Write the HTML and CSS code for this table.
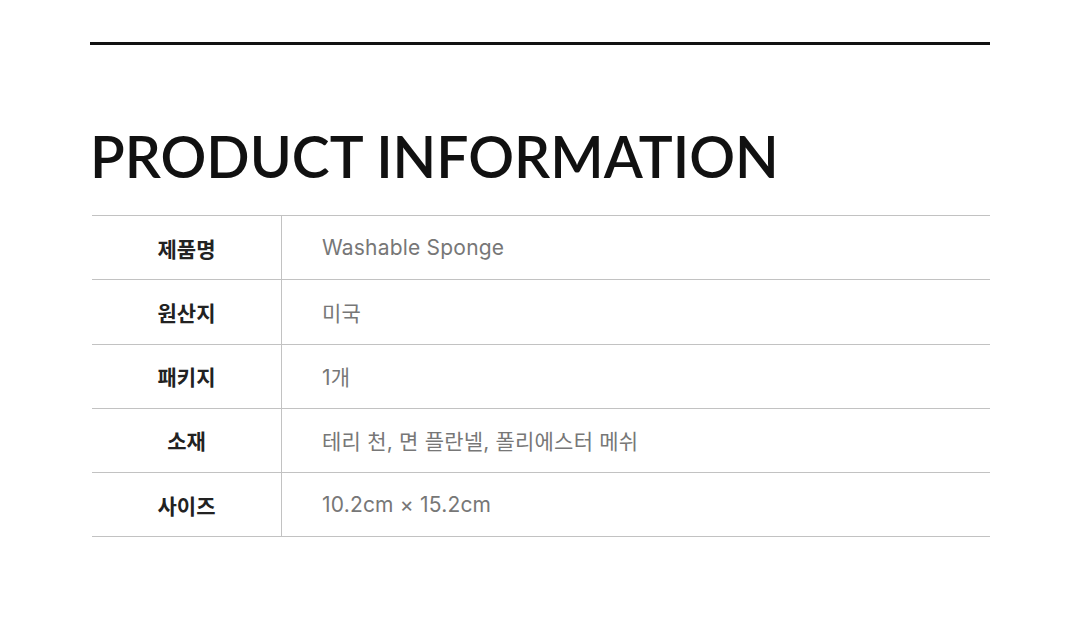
FILE: index.html
```html
<!DOCTYPE html>
<html lang="ko">
<head>
<meta charset="utf-8">
<link rel="stylesheet" href="styles.css">
</head>
<body>
<div class="page">
  <div class="topline"></div>
  <h1 class="title">PRODUCT INFORMATION</h1>
  <div class="table">
    <div class="row"><div class="label">제품명</div><div class="value">Washable Sponge</div></div>
    <div class="row"><div class="label">원산지</div><div class="value">미국</div></div>
    <div class="row"><div class="label">패키지</div><div class="value">1개</div></div>
    <div class="row"><div class="label">소재</div><div class="value">테리 천, 면 플란넬, 폴리에스터 메쉬</div></div>
    <div class="row"><div class="label">사이즈</div><div class="value">10.2cm × 15.2cm</div></div>
  </div>
</div>
</body>
</html>
```
FILE: styles.css
```css
html, body { margin: 0; padding: 0; background: #fff; }
.page {
  width: 900px;
  margin: 0 auto;
  padding-top: 42px;
}
.topline { height: 3px; background: #111; }
.title {
  margin: 0;
  padding-top: 80px;
  padding-bottom: 28px;
  font-family: Lato, "Noto Sans", sans-serif;
  font-weight: 600;
  font-size: 57px;
  line-height: 62px;
  color: #111;
  letter-spacing: 0;
}
.table {
  margin-left: 2px;
  border-top: 1px solid #c2c2c2;
}
.row {
  display: flex;
  height: 63.25px;
  border-bottom: 1px solid #c2c2c2;
}
.label {
  width: 189px;
  border-right: 1px solid #c2c2c2;
  display: flex;
  align-items: center;
  justify-content: center;
  font-family: Inter, "Noto Sans CJK KR", sans-serif;
  font-weight: 700;
  font-size: 21px;
  color: #222;
}
.value {
  flex: 1;
  display: flex;
  align-items: center;
  padding-left: 40px;
  font-family: Inter, "Noto Sans CJK KR", sans-serif;
  font-size: 21px;
  letter-spacing: 0.2px;
  color: #777;
}
```
